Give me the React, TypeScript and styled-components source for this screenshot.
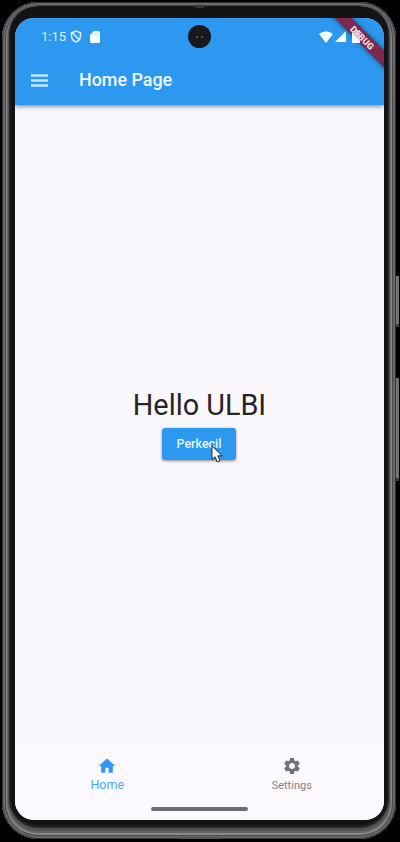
import React from 'react';
import styled, { createGlobalStyle } from 'styled-components';

const GlobalStyle = createGlobalStyle`
  *, *::before, *::after { box-sizing: border-box; }
  html, body { margin: 0; background: #000; overflow: hidden; }
`;

const Stage = styled.main`
  position: relative;
  width: 400px;
  height: 842px;
  padding: 2px 4px 3px 2px;
  background: #000;
  font-family: Roboto, sans-serif;
`;

const PhoneBody = styled.div`
  position: relative;
  height: 837px;
  padding: 16px 12px 19px 13px;
  border-radius: 36px;
  background: #131316;
  box-shadow:
    inset 0 0 0 1px #323233,
    inset 0 0 0 3px #68686a,
    inset 0 0 0 4px #49484a,
    inset 0 -1px 0 5px #8a888b,
    inset 0 -2px 0 6px #656467,
    inset 0 -4px 0 7px #535255,
    inset 0 -5px 2px 8px #2a2a2c;
`;

const SideButton = styled.span<{ $top: number; $height: number }>`
  position: absolute;
  right: 1px;
  top: ${(p) => p.$top}px;
  width: 5px;
  height: ${(p) => p.$height}px;
  border-bottom: 3px solid #3b3a3b;
  background: linear-gradient(90deg, #67666a, #7b7a7c 60%, #656466);
`;

const Speaker = styled.span`
  position: absolute;
  top: 3px;
  left: 193px;
  width: 9px;
  height: 3px;
  border-radius: 2px;
  background: #343335;
`;

const Screen = styled.div`
  position: relative;
  display: flex;
  flex-direction: column;
  width: 369px;
  height: 802px;
  overflow: hidden;
  border-radius: 19px;
  background: #fbf8fd;
`;

const Header = styled.header`
  flex: none;
  height: 87px;
  background: #2c98ef;
  box-shadow: 0 1px 5px rgba(0, 0, 0, 0.55);
`;

const StatusBar = styled.div`
  display: flex;
  align-items: center;
  height: 37px;
  padding: 0 24px 0 26px;
  color: #f6fbff;
`;

const Time = styled.span`
  width: 28px;
  font-size: 13px;
  line-height: 16px;
  letter-spacing: 0;
  white-space: nowrap;
  color: #d9edff;
`;

const StatusIcon = styled.svg<{ $gap?: number }>`
  flex: none;
  margin-left: ${(p) => p.$gap ?? 0}px;
  fill: currentColor;
`;

const SystemIcons = styled.div`
  position: relative;
  z-index: 2;
  display: flex;
  align-items: center;
  margin-left: auto;
`;

const Camera = styled.span`
  position: absolute;
  top: 7px;
  left: 173px;
  display: flex;
  align-items: center;
  justify-content: center;
  gap: 3px;
  width: 23px;
  height: 23px;
  border-radius: 50%;
  background: #17191d;
`;

const LensDot = styled.i`
  width: 2px;
  height: 2px;
  background: #4b4e55;
`;

const AppBar = styled.div`
  display: flex;
  align-items: center;
  height: 50px;
  padding-left: 16px;
`;

const MenuButton = styled.button`
  display: flex;
  width: 17px;
  padding: 0;
  border: 0;
  background: none;
`;

const Title = styled.h1`
  margin: 0 0 0 31px;
  font-size: 17.9px;
  font-weight: 500;
  line-height: 24px;
  color: #eff8ff;
`;

const DebugRibbon = styled.span`
  position: absolute;
  z-index: 1;
  top: 13px;
  left: 302px;
  width: 90px;
  height: 12px;
  transform: rotate(45deg);
  background: #7e294d;
  box-shadow: 0 0 5px rgba(0, 0, 0, 0.5);
`;

const DebugText = styled.span`
  position: absolute;
  z-index: 3;
  top: 14px;
  left: 302px;
  width: 90px;
  transform: rotate(45deg);
  font-size: 9.2px;
  font-weight: 900;
  line-height: 12px;
  text-align: center;
  color: #eddce4;
  text-shadow: 0 0 1px #7e294d;
`;

const Content = styled.section`
  flex: 1;
  display: flex;
  flex-direction: column;
  align-items: center;
  padding-top: 282px;
`;

const Greeting = styled.p`
  margin: 0;
  font-size: 28.8px;
  line-height: 36px;
  color: #252427;
`;

const ActionButton = styled.button`
  position: relative;
  width: 74px;
  height: 32px;
  margin: 5px 1px 0 0;
  padding: 0 0 1px;
  border: 0;
  border-radius: 3px;
  background: #2c98ef;
  box-shadow: 0 1px 3px rgba(0, 0, 0, 0.45);
  font: 500 12.5px Roboto, sans-serif;
  color: #e8f5ff;
`;

const Cursor = styled.svg`
  position: absolute;
  left: 49px;
  top: 17px;
`;

const BottomNav = styled.nav`
  display: grid;
  grid-template-columns: 1fr 1fr;
  height: 75px;
  padding-top: 11px;
  background: #fcf9fe;
  box-shadow: 0 -1px 3px rgba(60, 50, 70, 0.035);
`;

const NavItem = styled.a<{ $active?: boolean }>`
  display: flex;
  flex-direction: column;
  align-items: center;
  color: ${(p) => (p.$active ? '#2c98ef' : '#737276')};
`;

const NavLabel = styled.span<{ $active?: boolean }>`
  margin-top: ${(p) => (p.$active ? 1 : 2)}px;
  font-size: ${(p) => (p.$active ? 12.4 : 11)}px;
  line-height: 15px;
  letter-spacing: ${(p) => (p.$active ? 0.1 : 0)}px;
  color: ${(p) => (p.$active ? '#4da7f0' : '#858388')};
`;

const HomeIndicator = styled.span`
  position: absolute;
  left: 136px;
  bottom: 9px;
  width: 97px;
  height: 4px;
  border-radius: 2px;
  background: #6e6c70;
`;

const BottomPort = styled.span`
  position: absolute;
  bottom: 0;
  left: 177px;
  width: 42px;
  height: 2px;
  background: #555457;
`;

export default function App() {
  return (
    <>
      <GlobalStyle />
      <Stage>
        <SideButton $top={276} $height={51} />
        <SideButton $top={378} $height={103} />
        <PhoneBody>
          <Speaker />
          <Screen>
            <Header>
              <StatusBar>
                <Time>1:15</Time>
                <StatusIcon width="12" height="13" viewBox="0 0 12 13" $gap={1}>
                  <path
                    d="M6 1 10.500 2.700V6c0 2.800-1.800 4.900-4.500 6C3.300 10.900 1.500 8.800 1.500 6V2.700ZM2 2.500l7.500 7.500"
                    fill="none"
                    stroke="#d9edff"
                    strokeWidth="1.5"
                  />
                </StatusIcon>
                <StatusIcon width="10" height="12" viewBox="0 0 10 12" $gap={8}>
                  <path d="M4 0h4.500Q10 0 10 1.500v9Q10 12 8.500 12h-7Q0 12 0 10.500V4Z" />
                  <path d="M4 2v2M6 1.500V4M8 1.500V4" stroke="#94ccf8" strokeWidth=".6" />
                </StatusIcon>
                <SystemIcons>
                  <StatusIcon width="14" height="12" viewBox="0 0 14 12">
                    <path d="M0 3Q7-2.500 14 3L7 12Z" />
                  </StatusIcon>
                  <StatusIcon width="11" height="11" viewBox="0 0 11 11" $gap={2}>
                    <path d="M11 0v11H0Z" />
                  </StatusIcon>
                  <StatusIcon width="8" height="13" viewBox="0 0 8 13" $gap={6}>
                    <path d="M2 1V0h4v1h2v12H0V1Z" />
                  </StatusIcon>
                </SystemIcons>
              </StatusBar>
              <AppBar>
                <MenuButton aria-label="Menu">
                  <svg width="17" height="13" viewBox="0 0 17 13">
                    <path d="M0 1.500h17M0 6.500h17M0 11.500h17" stroke="#c7e5ff" strokeWidth="2.4" />
                  </svg>
                </MenuButton>
                <Title>Home Page</Title>
              </AppBar>
            </Header>
            <Content>
              <Greeting>Hello ULBI</Greeting>
              <ActionButton>
                Perkecil
                <Cursor width="12" height="18" viewBox="0 0 12 18">
                  <path
                    d="M1 1v13.500l3-2.800 2.200 5.300 2.800-1.200-2.200-5h4.500Z"
                    fill="#fff"
                    stroke="#26282b"
                    strokeWidth="1"
                  />
                </Cursor>
              </ActionButton>
            </Content>
            <BottomNav>
              <NavItem $active>
                <svg width="20" height="20" viewBox="0 0 24 24" fill="currentColor">
                  <path d="M10 20v-6h4v6h5v-8h3L12 3 2 12h3v8z" />
                </svg>
                <NavLabel $active>Home</NavLabel>
              </NavItem>
              <NavItem>
                <svg width="20" height="20" viewBox="0 0 24 24" fill="currentColor">
                  <path d="M19.140 12.940c.04-.3.06-.61.06-.94 0-.32-.02-.64-.07-.94l2.030-1.580c.18-.14.23-.41.12-.61l-1.920-3.320c-.12-.22-.37-.29-.59-.22l-2.390.96c-.5-.38-1.030-.7-1.620-.94l-.36-2.540c-.04-.24-.24-.41-.48-.41h-3.840c-.24 0-.43.17-.47.41l-.36 2.540c-.59.24-1.130.57-1.620.94l-2.390-.96c-.22-.08-.47 0-.59.22L2.740 8.870c-.12.21-.08.47.12.61l2.030 1.580c-.05.3-.09.63-.09.94s.02.64.07.94l-2.030 1.580c-.18.14-.23.41-.12.61l1.920 3.320c.12.22.37.29.59.22l2.390-.96c.5.38 1.030.7 1.620.94l.36 2.540c.05.24.24.41.48.41h3.840c.24 0 .44-.17.47-.41l.36-2.540c.59-.24 1.130-.56 1.620-.94l2.390.96c.22.08.47 0 .59-.22l1.920-3.320c.12-.22.07-.47-.12-.61zM12 15.600c-1.980 0-3.600-1.620-3.600-3.600s1.620-3.600 3.600-3.600 3.600 1.620 3.600 3.600-1.620 3.600-3.600 3.600z" />
                </svg>
                <NavLabel>Settings</NavLabel>
              </NavItem>
            </BottomNav>
            <Camera>
              <LensDot />
              <LensDot />
            </Camera>
            <DebugRibbon />
            <DebugText>DEBUG</DebugText>
            <HomeIndicator />
          </Screen>
          <BottomPort />
        </PhoneBody>
      </Stage>
    </>
  );
}
